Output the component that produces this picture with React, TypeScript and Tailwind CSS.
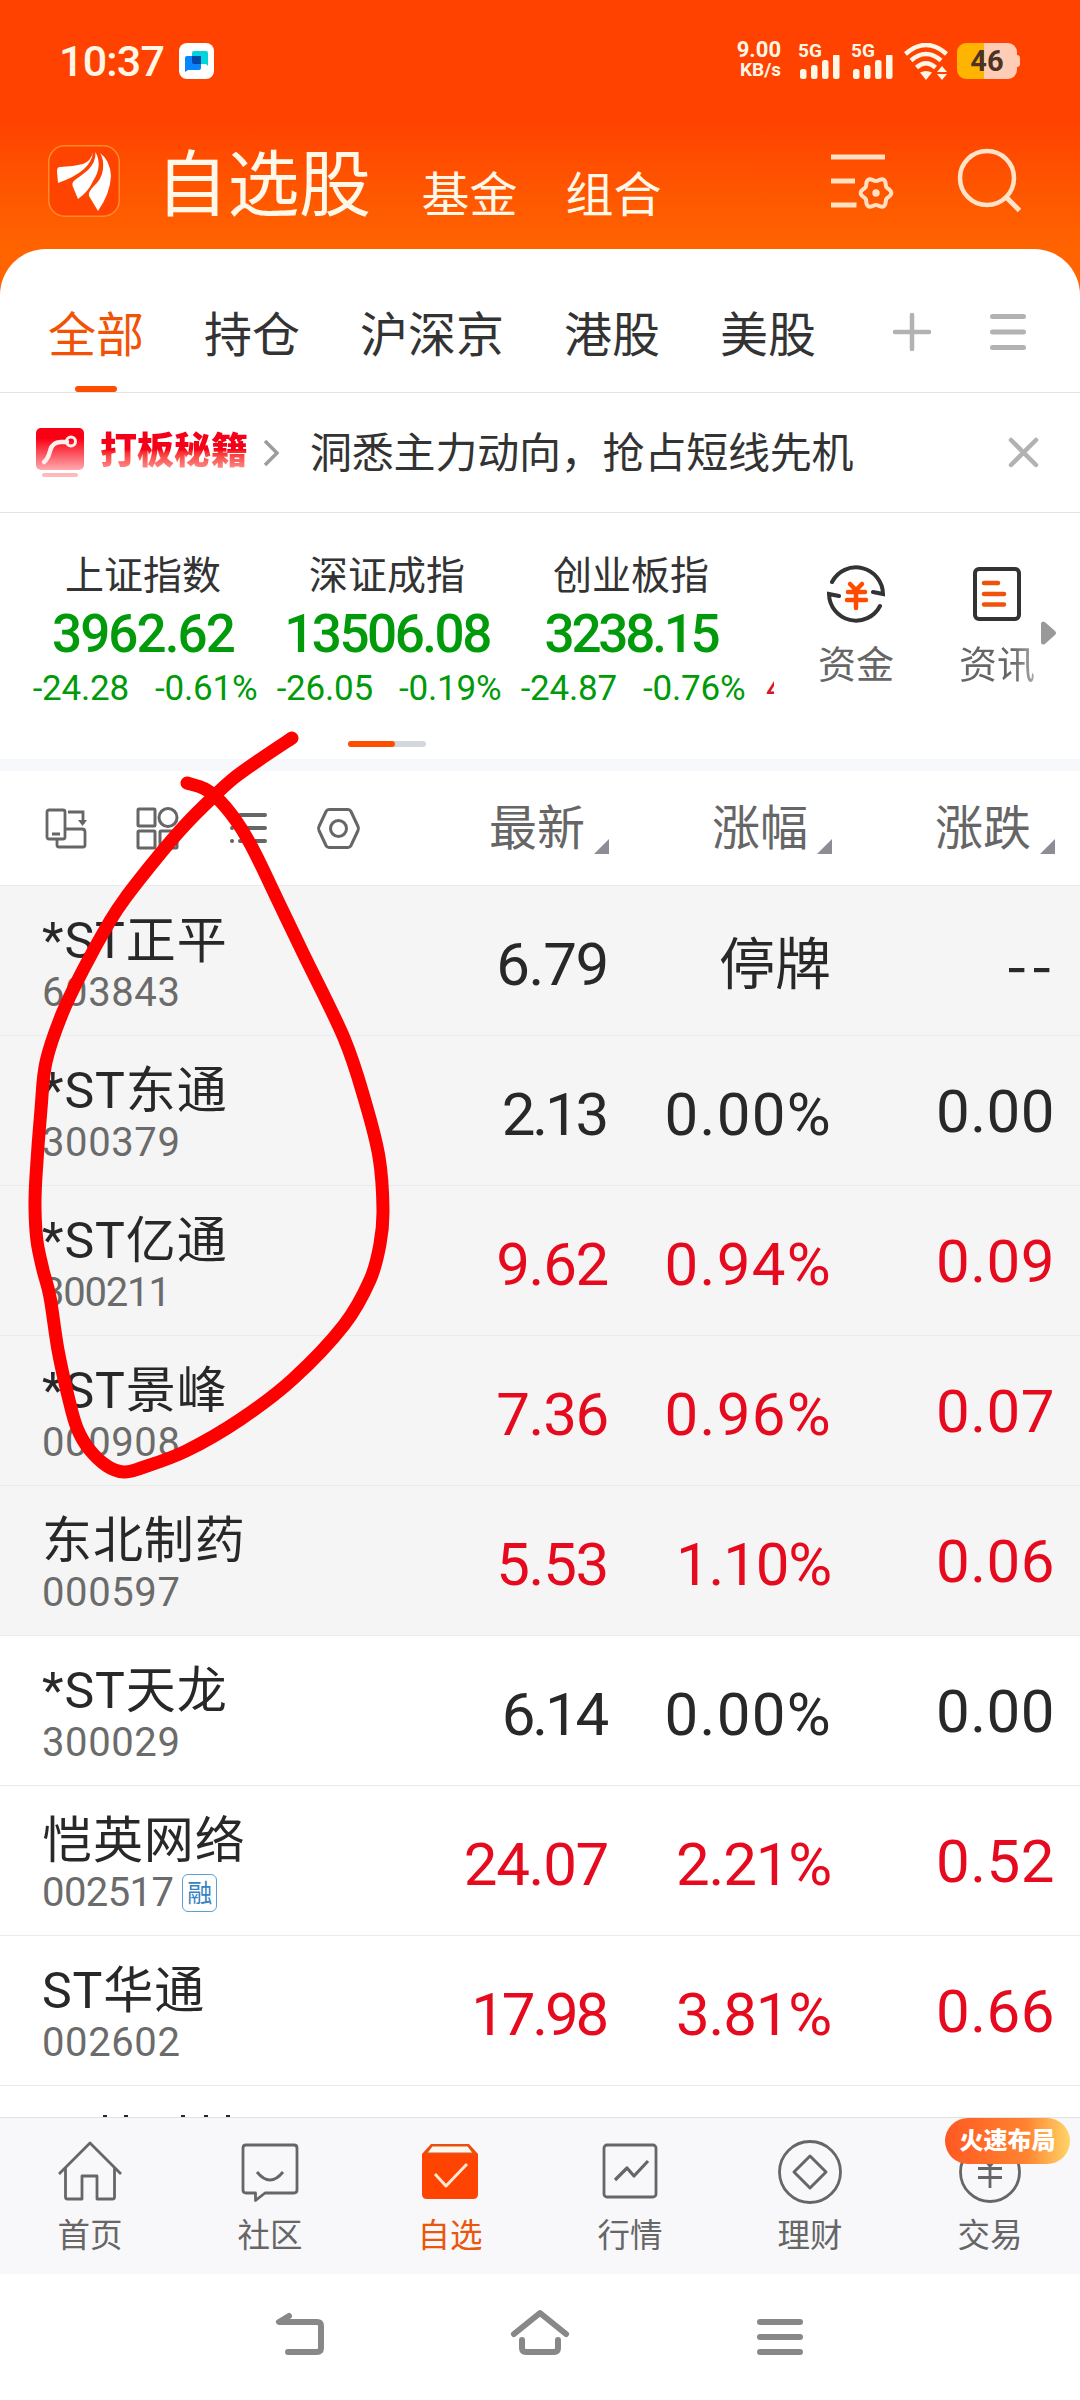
import type { ReactNode } from "react";
import clsx from "clsx";

type Stock = {
  name: string;
  code: string;
  price: string;
  percent: string;
  change: string;
  trend: "up" | "flat";
  pinned?: boolean;
  margin?: boolean;
};

const groups = ["全部", "持仓", "沪深京", "港股", "美股"];

const indexes = [
  { name: "上证指数", value: "3962.62", change: "-24.28", percent: "-0.61%", tracking: "tracking-[-1.9px]" },
  { name: "深证成指", value: "13506.08", change: "-26.05", percent: "-0.19%", tracking: "tracking-[-2.5px]" },
  { name: "创业板指", value: "3238.15", change: "-24.87", percent: "-0.76%", tracking: "tracking-[-3.2px]" },
];

const stocks: Stock[] = [
  { name: "*ST正平", code: "603843", price: "6.79", percent: "停牌", change: "--", trend: "flat", pinned: true },
  { name: "*ST东通", code: "300379", price: "2.13", percent: "0.00%", change: "0.00", trend: "flat", pinned: true },
  { name: "*ST亿通", code: "300211", price: "9.62", percent: "0.94%", change: "0.09", trend: "up", pinned: true },
  { name: "*ST景峰", code: "000908", price: "7.36", percent: "0.96%", change: "0.07", trend: "up", pinned: true },
  { name: "东北制药", code: "000597", price: "5.53", percent: "1.10%", change: "0.06", trend: "up", pinned: true },
  { name: "*ST天龙", code: "300029", price: "6.14", percent: "0.00%", change: "0.00", trend: "flat" },
  { name: "恺英网络", code: "002517", price: "24.07", percent: "2.21%", change: "0.52", trend: "up", margin: true },
  { name: "ST华通", code: "002602", price: "17.98", percent: "3.81%", change: "0.66", trend: "up" },
];

// Hand-drawn marker loop, sampled along the stroke
const markerPoints = [
  [292, 738], [262, 758], [234, 778], [212, 798], [186, 824], [160, 854], [126, 897], [110, 921],
  [83, 970], [62, 1014], [46, 1062], [41, 1109], [36, 1176], [35, 1208], [37, 1241], [43, 1270],
  [50, 1297], [58, 1350], [69, 1400], [77, 1428], [89, 1449], [107, 1466], [124, 1472], [141, 1468],
  [186, 1451], [241, 1419], [293, 1379], [344, 1325], [370, 1280], [380, 1244], [383, 1210],
  [379, 1157], [365, 1101], [344, 1038], [303, 953], [279, 903], [255, 853], [239, 825], [221, 802],
  [205, 789], [187, 783],
];

const smoothPath = (points: number[][]) => {
  let d = `M${points[0][0]} ${points[0][1]}`;
  for (let i = 0; i < points.length - 1; i++) {
    const p0 = points[i - 1] ?? points[i];
    const p1 = points[i];
    const p2 = points[i + 1];
    const p3 = points[i + 2] ?? p2;
    d += ` C${p1[0] + (p2[0] - p0[0]) / 6} ${p1[1] + (p2[1] - p0[1]) / 6} ${p2[0] - (p3[0] - p1[0]) / 6} ${p2[1] - (p3[1] - p1[1]) / 6} ${p2[0]} ${p2[1]}`;
  }
  return d;
};

// Six-lobed gear outline
const gearPath = (cx: number, cy: number) => {
  const points = Array.from({ length: 73 }, (_, i) => {
    const a = (i * Math.PI) / 36;
    const r = 13.6 + 1.7 * Math.cos(6 * a);
    return [cx + r * Math.cos(a), cy + r * Math.sin(a)];
  });
  return `${smoothPath(points)}Z`;
};

const Signal = () => (
  <div className="h-9 w-[42px]">
    <div className="h-3 text-[19px] leading-[15px] font-bold">5G</div>
    <svg className="ml-0.5 block h-6 w-10" viewBox="0 0 40 24" fill="currentColor">
      <rect x="0" y="14" width="6.5" height="10" rx="2.5" />
      <rect x="11" y="10" width="6.5" height="14" rx="2.5" />
      <rect x="22" y="5" width="6.5" height="19" rx="2.5" />
      <rect x="33" y="-1" width="6.5" height="25" rx="2.5" />
    </svg>
  </div>
);

const StatusBar = () => (
  <div className="flex h-[122px] items-center pl-[59px] pr-[60px] text-[#fff6e6]">
    <span className="w-[107px] text-[43px] leading-none font-medium tracking-[-0.8px]">10:37</span>
    <svg className="ml-[13px] h-9 w-[35px]" viewBox="0 0 35 36">
      <rect width="35" height="36" rx="8" fill="#fff" />
      <path d="M15 8h12q2 0 2 2v13l-2-2H15q-2 0-2-2v-9q0-2 2-2z" fill="#00d5dc" />
      <path d="M8 13h12q2 0 2 2v10q0 2-2 2H9l-3 2V15q0-2 2-2z" fill="#0787ff" />
      <path d="M13 13h9v8h-7q-2 0-2-2z" fill="#0546a8" />
    </svg>
    <div className="ml-auto flex h-9 items-start">
      <div className="mr-[17px] -mt-1.5 w-12 text-right font-bold">
        <div className="text-[22px] leading-[26px]">9.00</div>
        <div className="-mt-1 text-[19px] leading-[22px]">KB/s</div>
      </div>
      <Signal />
      <div className="w-[11px]" />
      <Signal />
      <svg className="ml-[11px] h-[37px] w-11" viewBox="0 0 44 37" fill="none" stroke="currentColor" strokeWidth="4.5">
        <path d="M1.500 11Q22-7 42.500 11" />
        <path d="M7 17.500Q22 4.500 37 17.500" />
        <path d="M12.500 24.500Q22 16 31.500 24.500" />
        <path d="M16 29.500q6-3 12 0L22 37z" fill="currentColor" stroke="none" />
        <path d="M33 29l5-6 5 6zM33 31h10l-5 6z" fill="currentColor" stroke="none" />
      </svg>
      <div className="ml-[9px] flex items-center">
        <div className="flex h-9 w-[60px] items-center justify-center rounded-[9px] bg-linear-to-r from-[#ffb400] from-45% to-[#ffcdb5] to-45% text-[29px] leading-none font-bold text-[#4b3326]">
          46
        </div>
        <div className="h-3 w-[3px] rounded-r bg-[#ffcdb5]" />
      </div>
    </div>
  </div>
);

const AppHeader = () => (
  <div className="flex h-[127px] pl-12 pr-[59px] text-[#fff7e8]">
    <svg className="mt-[23px] size-[72px]" viewBox="0 0 72 72">
      <rect x="0.750" y="0.750" width="70.500" height="70.500" rx="16" fill="#ff4300" stroke="#ff8a2a" strokeWidth="1.500" />
      <path d="M45 7Q43 16 35 19Q23 22 12 22Q9 22 9 26L10 38Q27 32 36 24Q44 17 45 7z" fill="#fff" />
      <path d="M47.500 7Q48 17 40 25Q34 30 27 35Q23 38 25 42L30 54Q41 46 45 36Q55 21 47.500 7z" fill="#fff" />
      <path d="M52 8Q56 14 55 24Q54 34 45 42Q40 47 41 51L50 66Q62 49 63 31Q62 15 52 8z" fill="#fff" />
    </svg>
    <span className="ml-9 mt-[28px] text-[72px] leading-[72px] tracking-[-0.5px]">自选股</span>
    <span className="ml-[51px] mt-[50px] text-[48px] leading-[48px]">基金</span>
    <span className="ml-12 mt-[50px] text-[48px] leading-[48px]">组合</span>
    <svg className="ml-auto mt-[28px] h-[70px] w-16" viewBox="0 0 64 70" fill="none" stroke="#ffe0c2" strokeWidth="5">
      <path d="M1 7h54M1 31h24M1 55h25.500" />
      <path d={gearPath(46, 43)} strokeWidth="4" />
      <circle cx="46" cy="43" r="3.700" fill="#ffe0c2" stroke="none" />
    </svg>
    <svg className="ml-[63px] mt-[25px] h-[66px] w-[64px]" viewBox="0 0 64 66" fill="none" stroke="#ffe3c8" strokeWidth="4.500">
      <circle cx="30" cy="31" r="27" />
      <path d="M49 50l13.500 13.500" strokeWidth="5" />
    </svg>
  </div>
);

const GroupTabs = () => (
  <div className="flex h-[144px] items-center border-b border-[#e3e3e3] pl-12 pr-[54px] text-[48px] text-[#333]">
    <div className="flex h-full gap-[60px]">
      {groups.map((group, i) => (
        <div key={group} className={clsx("relative flex h-full items-center pt-[30px] leading-none", i === 0 && "text-[#f25206]")}>
          {group}
          {i === 0 && <div className="absolute bottom-0 left-[27px] h-1.5 w-[42px] rounded-full bg-[#ff4c00]" />}
        </div>
      ))}
    </div>
    <svg className="ml-auto mt-[22px] size-10" viewBox="0 0 40 40" stroke="#b2b2b2" strokeWidth="4.500" strokeLinecap="round">
      <path d="M20 3v34M3 20h34" />
    </svg>
    <svg className="ml-[58px] mt-[22px] h-10 w-9" viewBox="0 0 36 40" stroke="#b2b2b2" strokeWidth="5" strokeLinecap="round">
      <path d="M2.500 4.500h31M2.500 20h31M2.500 35.500h31" />
    </svg>
  </div>
);

const PromoBar = () => (
  <div className="flex h-[120px] items-center border-b border-[#e3e3e3] pl-9 pr-[41px]">
    <svg className="h-[50px] w-12" viewBox="0 0 48 50" fill="none">
      <defs>
        <linearGradient id="promo" x1="0" y1="0" x2="0" y2="1">
          <stop offset="0.250" stopColor="#fa0014" />
          <stop offset="1" stopColor="#ffaaae" />
        </linearGradient>
      </defs>
      <rect y="0" width="48" height="42" rx="5" fill="url(#promo)" />
      <path d="M8 34Q12 31 14 23Q16 14 25 14H31" stroke="#fff0f0" strokeWidth="4.500" strokeLinecap="round" />
      <circle cx="35" cy="13.500" r="4.500" stroke="#fff0f0" strokeWidth="3" />
      <rect x="6" y="45" width="36" height="4" rx="2" fill="#ffb9bc" />
    </svg>
    <span className="ml-4 mb-0.5 bg-linear-to-b from-[#f50018] from-45% to-[#ff9ea3] bg-clip-text text-[37px] leading-[44px] font-black text-transparent">
      打板秘籍
    </span>
    <svg className="ml-[15px] h-7 w-4" viewBox="0 0 16 28" fill="none" stroke="#9c9c9c" strokeWidth="3.500">
      <path d="M2 2l12 12L2 26" />
    </svg>
    <span className="ml-[31px] mt-0.5 text-[42px] leading-none tracking-[-0.2px] text-[#333]">洞悉主力动向，抢占短线先机</span>
    <svg className="ml-auto size-[31px]" viewBox="0 0 31 31" stroke="#b2b2b2" strokeWidth="4.500" strokeLinecap="round">
      <path d="M3 3l25 25M28 3L3 28" />
    </svg>
  </div>
);

const IndexStrip = () => (
  <div className="relative flex h-[246px]">
    <div className="flex w-[774px] overflow-hidden pl-[21px] text-[#009a0a]">
      {indexes.map((item) => (
        <div key={item.name} className="flex w-[244px] shrink-0 flex-col items-center pt-[41px]">
          <span className="text-[39px] leading-[44px] text-[#333]">{item.name}</span>
          <span className={clsx("mt-[9px] text-[53px] leading-[54px] font-medium", item.tracking)}>{item.value}</span>
          <div className="mt-[7px] flex gap-[26px] pl-1 text-[35px] leading-[42px] tracking-[-0.2px] whitespace-nowrap">
            <span>{item.change}</span>
            <span>{item.percent}</span>
          </div>
        </div>
      ))}
      <span className="ml-[13px] mt-[155px] text-[35px] leading-[42px] text-[#d9142b]">4</span>
    </div>
    <div className="flex w-[164px] flex-col items-center pt-[51px]">
      <svg className="size-[60px]" viewBox="0 0 60 60" fill="none" strokeLinecap="round">
        <path d="M6 18A27 27 0 0 1 57 30L47 28" stroke="#333" strokeWidth="4" />
        <path d="M54 42A27 27 0 0 1 3 30L13 32" stroke="#333" strokeWidth="4" />
        <path d="M24 20l6 6 6-6M22 28h17M21 36h19M30 27v17" stroke="#ff4b00" strokeWidth="4.500" />
      </svg>
      <span className="mt-[16px] text-[38px] leading-[50px] text-[#666]">资金</span>
    </div>
    <div className="flex w-[118px] flex-col items-center pt-[53px]">
      <svg className="h-[56px] w-12" viewBox="0 0 48 56" fill="none" strokeLinecap="round">
        <rect x="2" y="3" width="44" height="50" rx="4" stroke="#333" strokeWidth="4" />
        <path d="M11 17h14M11 28h20M11 38.500h20" stroke="#f0520b" strokeWidth="4.500" />
      </svg>
      <span className="mt-[18px] bg-linear-to-r from-[#666] from-70% to-[#aaa] bg-clip-text text-[38px] leading-[50px] text-transparent">资讯</span>
    </div>
    <svg className="absolute left-[1041px] top-[108px] h-6 w-[15px]" viewBox="0 0 15 24" fill="#999">
      <path d="M0 2q2-3 5 0l9 8q2 2 0 4l-9 8q-3 3-5 0z" />
    </svg>
    <div className="absolute left-[348px] top-[228px] h-1.5 w-[78px] rounded-full bg-[#d3d7db]">
      <div className="h-full w-[47px] rounded-full bg-[#ff4e00]" />
    </div>
  </div>
);

const SortHeader = ({ label, className }: { label: string; className: string }) => (
  <div className={clsx("flex items-center justify-end", className)}>
    <span className="mt-0.5 text-[48px] leading-none">{label}</span>
    <svg className="ml-[9px] mt-[36px] size-[15px]" viewBox="0 0 15 15" fill="#8d8d95">
      <path d="M15 0v15H0z" />
    </svg>
  </div>
);

const TableHeader = () => (
  <div className="flex h-[115px] items-center border-b border-[#ebebeb] pl-[44px] text-[#666]">
    <svg className="size-[45px]" viewBox="0 0 45 45" fill="none" stroke="currentColor" strokeWidth="2.800">
      <rect x="3" y="4" width="18" height="29" rx="2" />
      <path d="M8 28h8M24 6h15v12M13 34v5q0 2 2 2h24q2 0 2-2V26q0-3-3-3H21" />
      <path d="M34 14h9l-4.500 6z" fill="currentColor" stroke="none" />
    </svg>
    <svg className="ml-[46px] size-[45px]" viewBox="0 0 45 45" fill="none" stroke="currentColor" strokeWidth="3">
      <rect x="3" y="3" width="17" height="17" rx="1" />
      <circle cx="33" cy="11.500" r="9" />
      <rect x="3" y="25" width="17" height="17" rx="1" />
      <rect x="25" y="25" width="17" height="17" rx="1" />
    </svg>
    <svg className="ml-[48px] h-[34px] w-10" viewBox="0 0 40 34" fill="none" stroke="currentColor" strokeWidth="4" strokeLinecap="round">
      <path d="M12 4h25M12 17h25M12 30h25M4 4h.1M4 17h.1M4 30h.1" />
    </svg>
    <svg className="ml-[48px] size-[45px]" viewBox="0 0 45 45" fill="none" stroke="currentColor" strokeWidth="3" strokeLinejoin="round">
      <path d="M13 3.500h19q2 0 3 2l7 15q1 2 0 4l-7 15q-1 2-3 2H13q-2 0-3-2l-7-15q-1-2 0-4l7-15q1-2 3-2z" />
      <circle cx="22.500" cy="22.500" r="8" />
    </svg>
    <SortHeader label="最新" className="ml-auto" />
    <SortHeader label="涨幅" className="w-[223px]" />
    <SortHeader label="涨跌" className="mr-[25px] w-[223px]" />
  </div>
);

const Figure = ({ text, className }: { text: string; className: string }) => (
  <span className={clsx("text-right text-[60px] leading-[70px]", className)}>{text}</span>
);

const StockRow = ({ stock }: { stock: Stock }) => (
  <div
    className={clsx(
      "flex h-[150px] border-b border-[#ebebeb] pl-[42px]",
      stock.pinned ? "bg-[#f5f5f5]" : "bg-white",
      stock.trend === "up" ? "text-[#e60a1e]" : "text-[#282828]"
    )}
  >
    <div className="w-[300px] pt-[28px]">
      <div className="text-[50px] leading-[54px] tracking-[0.9px] text-[#282828]">{stock.name}</div>
      <div className="flex items-center text-[40px] leading-[50px] text-[#6b6b6b]">
        <span
          className={clsx(
            stock.code.endsWith("17") && "tracking-[-0.6px]",
            stock.code.endsWith("11") && "tracking-[-1.2px]",
            !stock.code.includes("1") && "tracking-[0.6px]"
          )}
        >
          {stock.code}
        </span>
        {stock.margin && (
          <span className="ml-[9px] flex h-[38px] w-[35px] items-center justify-center rounded-md border-[1.5px] border-[#5c9fd2] text-[25px] leading-none text-[#3583c4]">
            融
          </span>
        )}
      </div>
    </div>
    <Figure
      text={stock.price}
      className={clsx("mt-11 w-[267px]", stock.price.includes("1") ? "pr-[3px] tracking-[-3.2px]" : "pr-px tracking-[-1.3px]")}
    />
    {stock.percent === "停牌" ? (
      <span className="mt-11 w-[222px] text-right text-[56px] leading-[70px]">停牌</span>
    ) : (
      <Figure
        text={stock.percent}
        className={clsx("mt-11 w-[223px]", stock.percent.includes("1") ? "pr-px tracking-[-1.2px]" : "tracking-[1.3px]")}
      />
    )}
    {stock.change === "--" ? (
      <span className="mt-10 w-[225px] text-right font-['Noto_Sans_CJK_SC'] text-[60px] leading-[70px] tracking-[4px]">--</span>
    ) : (
      <Figure text={stock.change} className="mt-[41px] w-[223px] tracking-[0.5px]" />
    )}
  </div>
);

const TabItem = ({ label, active, children }: { label: string; active?: boolean; children: ReactNode }) => (
  <div className={clsx("relative flex w-[180px] flex-col items-center pt-[21px]", active ? "text-[#e9560c]" : "text-[#666]")}>
    <svg className="size-[66px]" viewBox="0 0 66 66" fill="none" stroke="currentColor" strokeWidth="2.800" strokeLinejoin="round">
      {children}
    </svg>
    <span className="mt-[11px] text-[32.500px] leading-[40px]">{label}</span>
  </div>
);

const BottomTabs = () => (
  <div className="flex h-[157px] border-t border-[#e2e2e5] bg-[#f8f8fa]">
    <TabItem label="首页">
      <path d="M2 35L33 4l31 31M8.500 29v29q0 2 2 2H25V37h15v23h15.500q2 0 2-2V29" />
    </TabItem>
    <TabItem label="社区">
      <path d="M9 6h48q3 0 3 3v42q0 3-3 3H28l-9.500 7.500V54H9q-3 0-3-3V9q0-3 3-3z" />
      <path d="M20 33q13 16 26 0" />
    </TabItem>
    <TabItem label="自选" active>
      <path d="M5 15l9-10h38l9 10v40q0 5-5 5H10q-5 0-5-5z" fill="#ff4300" stroke="none" />
      <path d="M15 6.500h36l6 8H9z" fill="#fff6f0" stroke="#df5616" strokeWidth="2" />
      <path d="M18 35l11 12 21-22" stroke="#ffe9d0" strokeWidth="3" />
    </TabItem>
    <TabItem label="行情">
      <rect x="7" y="6" width="52" height="52" rx="3" />
      <path d="M18 41l12-12 7 8 14-15" strokeWidth="3.200" />
    </TabItem>
    <TabItem label="理财">
      <circle cx="33" cy="33" r="30.500" />
      <path d="M33 17l16 16-16 16-16-16z" strokeWidth="3" />
    </TabItem>
    <TabItem label="交易">
      <circle cx="33" cy="33" r="29.500" />
      <path d="M24 16l9 11 9-11M21 29.500h24M21 38.500h24M33 27v22" />
    </TabItem>
  </div>
);

const SystemNav = () => (
  <div className="flex h-[126px] justify-center gap-[180px] bg-white pt-[30px]">
    <svg className="size-[60px]" viewBox="0 0 60 60" fill="none" stroke="#888" strokeWidth="6" strokeLinecap="round" strokeLinejoin="round">
      <path d="M19 12L9 18h38q4 0 4 4v22q0 4-4 4H18" />
    </svg>
    <svg className="size-[60px]" viewBox="0 0 60 60" fill="none" stroke="#888" strokeWidth="6" strokeLinecap="round" strokeLinejoin="round">
      <path d="M4 30L30 9l26 21M12 36v8q0 4 4 4h28q4 0 4-4v-8" />
    </svg>
    <svg className="size-[60px]" viewBox="0 0 60 60" stroke="#888" strokeWidth="6" strokeLinecap="round">
      <path d="M10 18h40M10 33h40M10 48h40" />
    </svg>
  </div>
);

export default function App() {
  return (
    <div className="relative h-[2400px] w-[1080px] overflow-hidden bg-white font-['Roboto','Noto_Sans_CJK_SC',sans-serif]">
      <div className="bg-linear-to-b from-[#ff4200] from-[122px] to-[#ff6400] to-[249px]">
        <StatusBar />
        <AppHeader />
        <div className="rounded-t-[46px] bg-white">
          <GroupTabs />
        </div>
      </div>
      <PromoBar />
      <IndexStrip />
      <div className="h-3 bg-[#f6f8fb]" />
      <TableHeader />
      {stocks.map((stock) => (
        <StockRow key={stock.code} stock={stock} />
      ))}
      {/* next row, only its top edge shows above the tab bar */}
      <div className="flex h-[31px] items-end">
        <svg className="h-1 w-60" viewBox="0 0 240 4" fill="#282828">
          <path d="M103 2h4v2h-4zM124 2h4v2h-4zM181 2h4v2h-4zM204 2h4v2h-4zM226 2h4v2h-4z" />
        </svg>
      </div>
      <BottomTabs />
      <SystemNav />

      <div className="absolute left-[945px] top-[2118px] flex h-[46px] w-[125px] items-center justify-center rounded-full bg-linear-to-r from-[#ff5722] via-[#ff8330] via-65% to-[#ffd466] text-[24px] leading-none font-black text-white">
        火速布局
      </div>
      <svg className="pointer-events-none absolute inset-0 h-[2400px] w-[1080px]" viewBox="0 0 1080 2400" fill="none">
        <path d={smoothPath(markerPoints)} stroke="#ff0000" strokeWidth="13" strokeLinecap="round" strokeLinejoin="round" />
      </svg>
    </div>
  );
}
